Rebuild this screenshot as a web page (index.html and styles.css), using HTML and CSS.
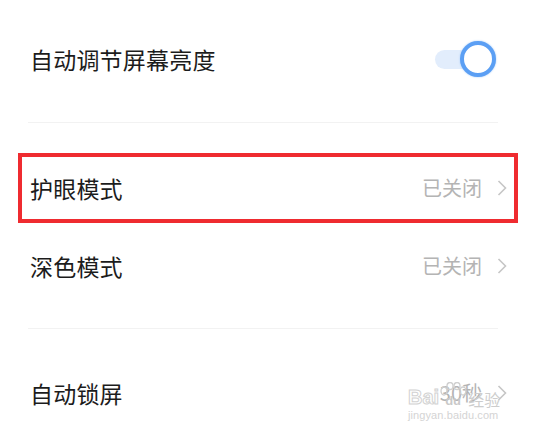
FILE: index.html
```html
<!DOCTYPE html>
<html lang="zh-CN">
<head>
<meta charset="utf-8">
<link rel="stylesheet" href="styles.css">
</head>
<body>
<div class="screen">
  <div class="row row-top">
    <span class="label">自动调节屏幕亮度</span>
    <div class="toggle"><span class="track"></span><span class="knob"></span></div>
  </div>
  <div class="divider"></div>
  <div class="row row-hl first-group">
    <span class="label">护眼模式</span>
    <span class="value">已关闭<svg class="chev" viewBox="0 0 10 16" width="10" height="16"><polyline points="1.5,1 8.5,8 1.5,15" fill="none" stroke="#c6c6c6" stroke-width="1.6"/></svg></span>
  </div>
  <div class="row second">
    <span class="label">深色模式</span>
    <span class="value">已关闭<svg class="chev" viewBox="0 0 10 16" width="10" height="16"><polyline points="1.5,1 8.5,8 1.5,15" fill="none" stroke="#c6c6c6" stroke-width="1.6"/></svg></span>
  </div>
  <div class="divider divider-2"></div>
  <div class="row last">
    <span class="label">自动锁屏</span>
    <span class="value">30秒<svg class="chev" viewBox="0 0 10 16" width="10" height="16"><polyline points="1.5,1 8.5,8 1.5,15" fill="none" stroke="#c6c6c6" stroke-width="1.6"/></svg></span>
  </div>
  <div class="watermark">
    <div class="wm-top">
      <span class="wm-bai">Bai</span>
      <span class="wm-paw">
        <svg viewBox="0 0 28 16" width="28" height="16"><g fill="none" stroke="#cfcfcf" stroke-width="1.3"><ellipse cx="5" cy="9" rx="3" ry="4"/><ellipse cx="11" cy="4" rx="3" ry="3.5"/><ellipse cx="18" cy="4" rx="3" ry="3.5"/><ellipse cx="24" cy="9" rx="3" ry="4"/></g></svg>
        <span class="wm-du">du</span>
      </span>
      <span class="wm-jy">经验</span>
    </div>
    <div class="wm-url">jingyan.baidu.com</div>
  </div>
</div>
</body>
</html>
```
FILE: styles.css
```css
html, body {
  margin: 0;
  padding: 0;
  background: #ffffff;
}
.screen {
  position: relative;
  width: 535px;
  height: 434px;
  overflow: hidden;
  font-family: "Noto Sans CJK SC", "Noto Sans", sans-serif;
  color: #1c1c1c;
}
.row {
  display: flex;
  align-items: center;
  justify-content: space-between;
  height: 62px;
  margin: 0 17px 0 18px;
  padding: 0 7px 0 8px;
  border: 4px solid transparent;
}
.row-top {
  height: 110px;
}
.row-hl {
  border-color: #ef2b30;
}
.first-group {
  margin-top: 30px;
}
.second {
  margin-top: 8px;
}
.last {
  margin-top: 29px;
}
.label {
  font-size: 23px;
  line-height: 1;
  letter-spacing: 0.2px;
}
.value {
  display: flex;
  align-items: center;
  font-size: 20px;
  line-height: 1;
  color: #b4b4b4;
}
.chev {
  margin-left: 15px;
  display: block;
}
.divider {
  height: 1px;
  margin: 4px 37px 0 28px;
  background: #f2f2f2;
}
.divider-2 {
  margin-top: 27px;
}
.toggle {
  position: relative;
  width: 61px;
  height: 36px;
  margin-right: 11px;
}
.track {
  position: absolute;
  left: 0;
  top: 9px;
  width: 44px;
  height: 19px;
  border-radius: 10px;
  background: #e2edfc;
}
.knob {
  position: absolute;
  right: 0;
  top: 0;
  box-sizing: border-box;
  width: 36px;
  height: 36px;
  border-radius: 50%;
  background: #ffffff;
  border: 4px solid #5b9ff4;
  box-shadow: 0 0 2px #9cc6f8;
}
.watermark {
  position: absolute;
  left: 408px;
  top: 381px;
  width: 100px;
  font-family: "Liberation Sans", Arial, sans-serif;
}
.wm-top {
  display: flex;
  align-items: flex-end;
  height: 26px;
}
.wm-bai {
  font-size: 20px;
  font-weight: bold;
  line-height: 1;
  color: #ffffff;
  -webkit-text-stroke: 1px #d2d2d2;
}
.wm-paw {
  position: relative;
  display: flex;
  flex-direction: column;
  align-items: center;
  width: 28px;
}
.wm-paw svg {
  display: block;
  margin-bottom: -4px;
}
.wm-du {
  font-size: 13px;
  font-weight: bold;
  line-height: 1;
  color: #c9c9c9;
}
.wm-jy {
  font-family: "Noto Sans CJK SC", sans-serif;
  font-size: 16px;
  line-height: 1;
  color: #cdcdcd;
  margin-left: 1px;
}
.wm-url {
  margin-top: 3px;
  font-size: 11px;
  line-height: 1;
  color: #d4d4d4;
  letter-spacing: 0.1px;
}
```
